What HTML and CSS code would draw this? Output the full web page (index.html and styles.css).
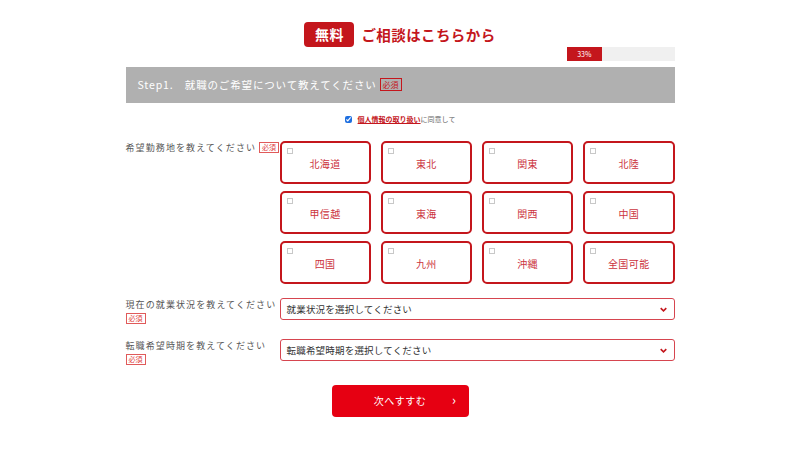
FILE: index.html
```html
<!DOCTYPE html>
<html lang="ja">
<head>
    <meta charset="UTF-8">
    <meta name="viewport" content="width=device-width, initial-scale=1.0">
    <title>無料 ご相談はこちらから</title>
    <link rel="stylesheet" href="styles.css">
</head>
<body>

    <div class="form-wrap">
        <h1 class="title"><span class="title-badge">無料</span>ご相談はこちらから</h1>

        <div class="progress">
            <div class="progress-bar" style="width: 33%">33%</div>
        </div>

        <div class="step">Step1.　就職のご希望について教えてください<span class="req req-step">必須</span></div>

        <div class="agree">
            <input type="checkbox" checked>
            <a href="#" class="agree-link">個人情報の取り扱い</a>に同意して
        </div>

        <div class="row">
            <div class="label">希望勤務地を教えてください<span class="req">必須</span></div>
            <div class="areas">
                <label class="area"><input type="checkbox"><span>北海道</span></label>
                <label class="area"><input type="checkbox"><span>東北</span></label>
                <label class="area"><input type="checkbox"><span>関東</span></label>
                <label class="area"><input type="checkbox"><span>北陸</span></label>
                <label class="area"><input type="checkbox"><span>甲信越</span></label>
                <label class="area"><input type="checkbox"><span>東海</span></label>
                <label class="area"><input type="checkbox"><span>関西</span></label>
                <label class="area"><input type="checkbox"><span>中国</span></label>
                <label class="area"><input type="checkbox"><span>四国</span></label>
                <label class="area"><input type="checkbox"><span>九州</span></label>
                <label class="area"><input type="checkbox"><span>沖縄</span></label>
                <label class="area"><input type="checkbox"><span>全国可能</span></label>
            </div>
        </div>

        <div class="row row-select">
            <div class="label">現在の就業状況を教えてください<br><span class="req req-under">必須</span></div>
            <div class="select">就業状況を選択してください
                <svg class="chev" viewBox="0 0 10 6" width="7" height="5"><path d="M1 1l4 4 4-4" fill="none" stroke="#c4161c" stroke-width="2.2"/></svg>
            </div>
        </div>

        <div class="row row-select">
            <div class="label">転職希望時期を教えてください<br><span class="req req-under">必須</span></div>
            <div class="select">転職希望時期を選択してください
                <svg class="chev" viewBox="0 0 10 6" width="7" height="5"><path d="M1 1l4 4 4-4" fill="none" stroke="#c4161c" stroke-width="2.2"/></svg>
            </div>
        </div>

        <div class="actions">
            <button class="next">次へすすむ<span class="next-arrow">›</span></button>
        </div>
    </div>

</body>
</html>
```

FILE: styles.css
```css
* {
    box-sizing: border-box;
}

body {
    margin: 0;
    font-family: "Noto Sans CJK JP", "Noto Sans", sans-serif;
    color: #444;
    background: #fff;
}

.form-wrap {
    width: 549px;
    margin: 0 auto;
    padding-top: 22px;
}

.title {
    display: flex;
    align-items: center;
    justify-content: center;
    margin: 0;
    height: 25px;
    font-size: 14.5px;
    line-height: 25px;
    font-weight: bold;
    color: #c4161c;
    letter-spacing: 0.4px;
}

.title-badge {
    display: inline-block;
    width: 50px;
    height: 25px;
    line-height: 25px;
    margin-right: 7px;
    border-radius: 4px;
    background: #c4161c;
    color: #fff;
    font-size: 14px;
    text-align: center;
}

.progress {
    width: 108px;
    height: 14px;
    margin: 0 0 6px auto;
    background: #f0f0f0;
}

.progress-bar {
    height: 14px;
    line-height: 14px;
    background: #c4161c;
    color: #fff;
    font-size: 7px;
    text-align: center;
}

.step {
    height: 36px;
    line-height: 36px;
    padding-left: 12px;
    background: #b0b0b0;
    color: #fff;
    font-size: 10.5px;
    letter-spacing: 0.85px;
}

.req {
    display: inline-block;
    margin-left: 3px;
    padding: 0 2px;
    border: 1px solid #e05a5a;
    color: #e04040;
    font-size: 7px;
    line-height: 9px;
    letter-spacing: 0;
    vertical-align: 1px;
    background: #fff;
}

.req-step {
    background: transparent;
    color: #c4161c;
    border-color: #c4161c;
    font-size: 8px;
    line-height: 11px;
}

.req-under {
    margin-left: 0;
    margin-top: 2px;
}

.agree {
    display: flex;
    align-items: center;
    justify-content: center;
    height: 16px;
    margin: 8px 0 14px;
    font-size: 7px;
    color: #666;
}

.agree input {
    width: 7px;
    height: 7px;
    margin: 0 6px 0 0;
    accent-color: #1e6fe0;
}

.agree-link {
    color: #c4161c;
    font-weight: bold;
}

.row {
    display: flex;
}

.label {
    width: 154px;
    font-size: 9px;
    letter-spacing: 1.1px;
    color: #555;
    line-height: 13px;
    white-space: nowrap;
}

.areas {
    flex: 1;
    display: grid;
    grid-template-columns: repeat(4, 1fr);
    column-gap: 10px;
    row-gap: 7px;
}

.area {
    position: relative;
    display: flex;
    align-items: center;
    justify-content: center;
    height: 43px;
    padding-top: 3px;
    border: 2px solid #c4161c;
    border-radius: 5px;
    color: #cc3440;
    font-size: 10px;
    line-height: 14px;
    letter-spacing: 0.5px;
}

.area input {
    position: absolute;
    top: 5px;
    left: 5px;
    width: 6px;
    height: 6px;
    margin: 0;
    appearance: none;
    border: 1px solid #c8c8c8;
    background: #fff;
}

.row-select {
    margin-top: 14px;
}

.row-select + .row-select {
    margin-top: 14px;
}

.select {
    flex: 1;
    display: flex;
    align-items: center;
    justify-content: space-between;
    height: 22px;
    padding: 0 7px 0 6px;
    border: 1px solid #d6454f;
    border-radius: 3px;
    font-size: 9.5px;
    line-height: 14px;
    color: #333;
    letter-spacing: 0.2px;
}

.actions {
    display: flex;
    justify-content: center;
    margin-top: 19px;
}

.next {
    position: relative;
    width: 137px;
    height: 32px;
    border: none;
    border-radius: 4px;
    background: #e60012;
    color: #fff;
    font-family: inherit;
    font-size: 10px;
    line-height: 14px;
    letter-spacing: 0.5px;
    padding: 0;
}

.next-arrow {
    position: absolute;
    right: 12px;
    top: 8px;
    font-size: 13px;
    line-height: 14px;
}
```
